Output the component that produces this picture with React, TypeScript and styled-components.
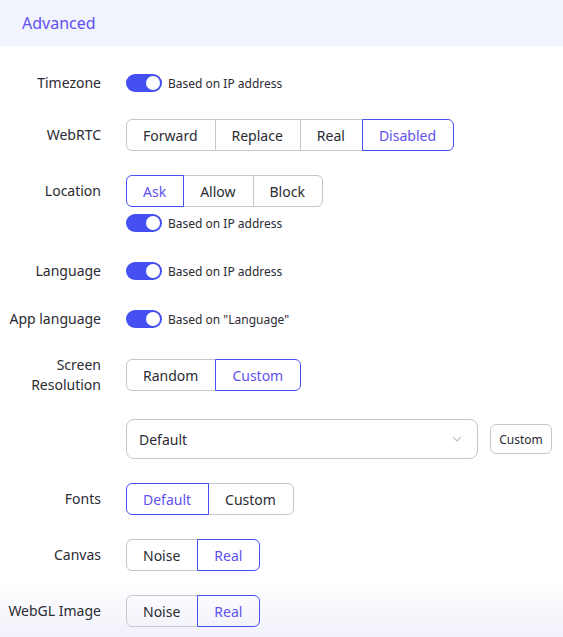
import React from 'react';
import styled, { createGlobalStyle } from 'styled-components';

// ── Data ──────────────────────────────────────────────────────────────────────

const ACCENT = '#4450f2';
const ACCENT_TEXT = '#6151f0';

type Segment = { options: string[]; active: number };

const WEBRTC: Segment = { options: ['Forward', 'Replace', 'Real', 'Disabled'], active: 3 };
const LOCATION: Segment = { options: ['Ask', 'Allow', 'Block'], active: 0 };
const RESOLUTION: Segment = { options: ['Random', 'Custom'], active: 1 };
const FONTS: Segment = { options: ['Default', 'Custom'], active: 0 };
const NOISE_REAL: Segment = { options: ['Noise', 'Real'], active: 1 };

// ── Small parts ───────────────────────────────────────────────────────────────

function Switch({ text }: { text: string }) {
  return (
    <SwitchLine>
      <Track>
        <Knob />
      </Track>
      <SwitchText>{text}</SwitchText>
    </SwitchLine>
  );
}

function Segmented({ options, active }: Segment) {
  return (
    <SegGroup>
      {options.map((opt, idx) => (
        <SegButton key={opt} $active={idx === active} $first={idx === 0} $last={idx === options.length - 1}>
          {opt}
        </SegButton>
      ))}
    </SegGroup>
  );
}

// ── Component ─────────────────────────────────────────────────────────────────

export default function App() {
  return (
    <>
      <GlobalStyle />
      <Panel>
        <BottomFade />
        <Header>Advanced</Header>
        <Form>
          <Row>
            <Label>Timezone</Label>
            <Switch text="Based on IP address" />
          </Row>
          <Row>
            <Label>WebRTC</Label>
            <Segmented {...WEBRTC} />
          </Row>
          <Row $top>
            <Label $offset={6}>Location</Label>
            <Stack>
              <Segmented {...LOCATION} />
              <Switch text="Based on IP address" />
            </Stack>
          </Row>
          <Row>
            <Label>Language</Label>
            <Switch text="Based on IP address" />
          </Row>
          <Row>
            <Label>App language</Label>
            <Switch text={'Based on "Language"'} />
          </Row>
          <Row>
            <Label>
              Screen
              <br />
              Resolution
            </Label>
            <Segmented {...RESOLUTION} />
          </Row>
          <Row>
            <Label />
            <SelectBox>
              <span>Default</span>
              <svg width="12" height="12" viewBox="0 0 12 12" fill="none">
                <path d="M2.5 4.5 6 8l3.5-3.5" stroke="#c4c4cc" strokeWidth="1.2" strokeLinecap="round" strokeLinejoin="round" />
              </svg>
            </SelectBox>
            <SmallButton>Custom</SmallButton>
          </Row>
          <Row>
            <Label>Fonts</Label>
            <Segmented {...FONTS} />
          </Row>
          <Row>
            <Label>Canvas</Label>
            <Segmented {...NOISE_REAL} />
          </Row>
          <Row>
            <Label>WebGL Image</Label>
            <Segmented {...NOISE_REAL} />
          </Row>
        </Form>
      </Panel>
    </>
  );
}

// ── Styled components ─────────────────────────────────────────────────────────

const GlobalStyle = createGlobalStyle`
  html, body {
    margin: 0;
    padding: 0;
    background: #ffffff;
  }
  body {
    font-family: 'Noto Sans', 'Liberation Sans', sans-serif;
    color: #2b2b33;
  }
`;

const Panel = styled.div`
  position: relative;
  width: 563px;
  height: 637px;
  overflow: hidden;
  background: #ffffff;
`;

const Header = styled.div`
  position: relative;
  height: 46px;
  display: flex;
  align-items: center;
  padding-left: 22px;
  background: #f1f3fd;
  color: ${ACCENT_TEXT};
  font-size: 16px;
`;

const Form = styled.div`
  position: relative;
  display: flex;
  flex-direction: column;
  gap: 24px;
  padding-top: 25px;
`;

const Row = styled.div<{ $top?: boolean }>`
  display: flex;
  align-items: ${(p) => (p.$top ? 'flex-start' : 'center')};
  min-height: 24px;
`;

const Label = styled.div<{ $offset?: number }>`
  width: 101px;
  flex-shrink: 0;
  margin-right: 25px;
  padding-top: ${(p) => p.$offset ?? 0}px;
  text-align: right;
  font-size: 14px;
  line-height: 20px;
  color: #2b2b33;
`;

const Stack = styled.div`
  display: flex;
  flex-direction: column;
  gap: 4px;
`;

const SwitchLine = styled.div`
  display: flex;
  align-items: center;
  gap: 6px;
  height: 24px;
`;

const Track = styled.div`
  position: relative;
  width: 36px;
  height: 18px;
  border-radius: 9px;
  background: ${ACCENT};
`;

const Knob = styled.div`
  position: absolute;
  top: 2px;
  right: 2px;
  width: 14px;
  height: 14px;
  border-radius: 50%;
  background: #ffffff;
`;

const SwitchText = styled.span`
  font-size: 12px;
  color: #2b2b33;
`;

const SegGroup = styled.div`
  display: flex;
  height: 32px;
`;

const SegButton = styled.div<{ $active: boolean; $first: boolean; $last: boolean }>`
  position: relative;
  display: flex;
  align-items: center;
  justify-content: center;
  padding: 0 17px 0 16px;
  font-size: 14px;
  color: ${(p) => (p.$active ? ACCENT_TEXT : '#2b2b33')};
  border: 1px solid ${(p) => (p.$active ? ACCENT : '#c6c6ce')};
  margin-left: ${(p) => (p.$first ? '0' : '-1px')};
  z-index: ${(p) => (p.$active ? 1 : 0)};
  border-radius: ${(p) =>
    p.$first && p.$last ? '6px' : p.$first ? '6px 0 0 6px' : p.$last ? '0 6px 6px 0' : '0'};
  background: transparent;
`;

const SelectBox = styled.div`
  box-sizing: border-box;
  width: 352px;
  height: 40px;
  display: flex;
  align-items: center;
  justify-content: space-between;
  padding: 0 14px 0 12px;
  border: 1px solid #c6c6ce;
  border-radius: 8px;
  font-size: 14px;
  color: #2b2b33;
`;

const SmallButton = styled.div`
  box-sizing: border-box;
  margin-left: 12px;
  width: 62px;
  height: 30px;
  display: flex;
  align-items: center;
  justify-content: center;
  border: 1px solid #c6c6ce;
  border-radius: 6px;
  font-size: 12px;
  color: #2b2b33;
`;

const BottomFade = styled.div`
  position: absolute;
  left: 0;
  right: 0;
  bottom: 0;
  height: 55px;
  pointer-events: none;
  background: linear-gradient(180deg, rgba(240, 241, 250, 0) 0%, rgba(240, 241, 250, 1) 100%);
`;
